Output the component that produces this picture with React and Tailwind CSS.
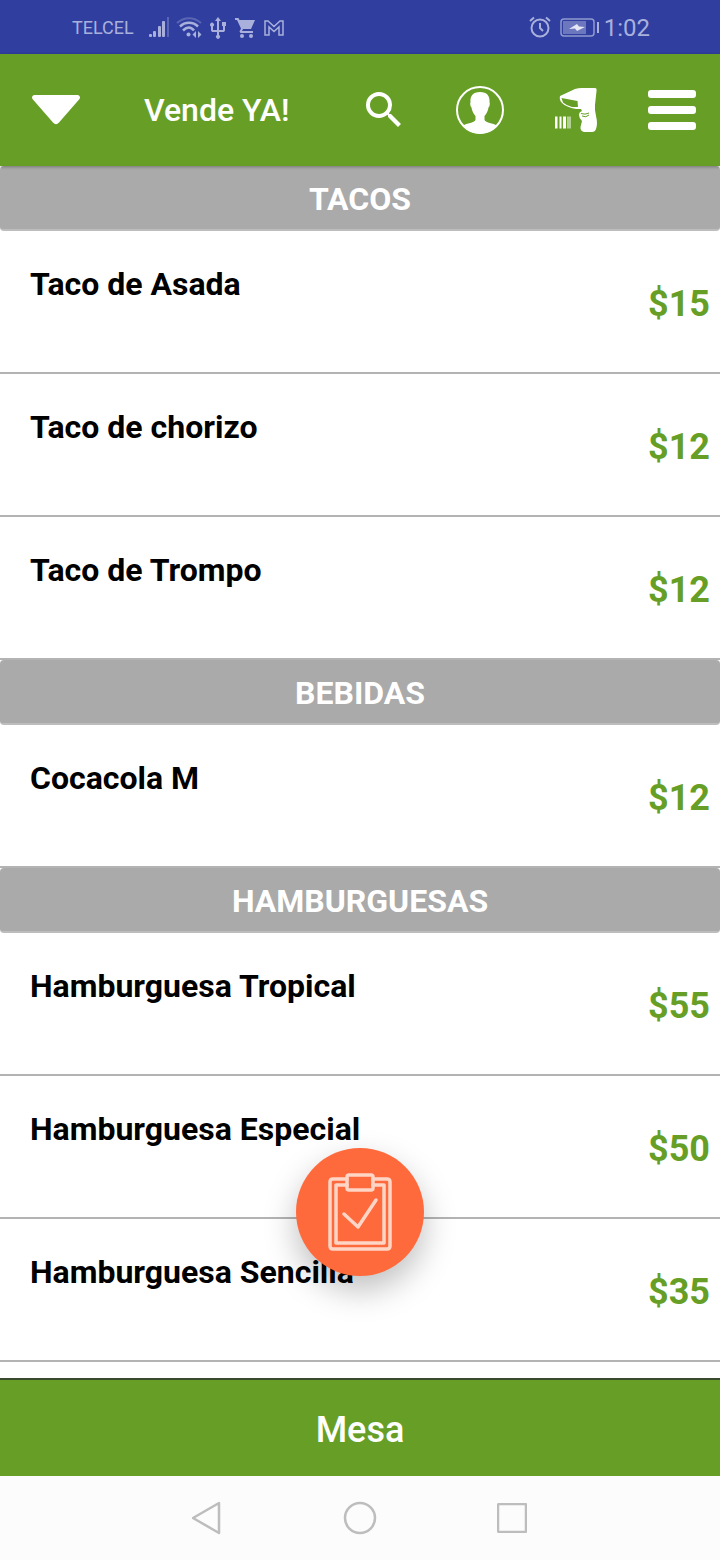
import { useState } from 'react';

const MENU = [
  {
    name: 'TACOS',
    items: [
      { id: 1, name: 'Taco de Asada', price: 15 },
      { id: 2, name: 'Taco de chorizo', price: 12 },
      { id: 3, name: 'Taco de Trompo', price: 12 },
    ],
  },
  {
    name: 'BEBIDAS',
    items: [{ id: 4, name: 'Cocacola M', price: 12 }],
  },
  {
    name: 'HAMBURGUESAS',
    items: [
      { id: 5, name: 'Hamburguesa Tropical', price: 55 },
      { id: 6, name: 'Hamburguesa Especial', price: 50 },
      { id: 7, name: 'Hamburguesa Sencilla', price: 35 },
    ],
  },
];

function StatusBar() {
  return (
    <div className="flex h-[54px] items-center justify-between bg-[#303f9f] pt-[2px] pl-[72px] pr-[70px] text-[#a9b0dc]">
      <div className="flex items-center">
        <span className="w-[76px] text-lg">TELCEL</span>
        <svg width="22" height="22" viewBox="0 0 22 22" fill="currentColor">
          <rect x="1" y="17" width="3" height="3" rx="1" />
          <rect x="5" y="14" width="3" height="6" rx="1" />
          <rect x="10" y="9" width="3" height="11" rx="1" />
          <rect x="14" y="4" width="3" height="16" rx="1" />
          <rect x="19" y="0" width="2" height="20" opacity="0.35" />
        </svg>
        <svg className="ml-[6px]" width="28" height="22" viewBox="0 0 28 22" fill="none" stroke="currentColor" strokeWidth="2">
          <path d="M1 6C8 -0.500 18 -0.500 25 6" opacity="0.35" />
          <path d="M4 9.500C9 4.500 17 4.500 22 9.500" strokeWidth="2.500" />
          <path d="M7 13.500C11 9.500 15 9.500 18 13.500" strokeWidth="2.500" />
          <circle cx="12.500" cy="17.500" r="2" fill="currentColor" stroke="none" />
          <path d="M20 14l-3.500 3.500 3.500 3.500zM22 14l3.500 3.500L22 21z" fill="currentColor" stroke="none" />
        </svg>
        <svg className="ml-[6px]" width="16" height="22" viewBox="0 0 16 22" fill="currentColor">
          <path d="M8 0l3 4H9v9h4V9h-1V5h4v4h-1v4.500L14 15H9v3a2 2 0 1 1-2 0v-3H2l-1-1.500V9.500a2 2 0 1 1 2 0V13h4V4H5z" />
        </svg>
        <svg className="ml-[8px]" width="24" height="22" viewBox="0 0 24 22" fill="currentColor">
          <path d="M1 1h3.500l1 2H21l-4 9H9l-1 2h11v2H6.500l-1-1.500L7 11.500 3 3H1z" />
          <circle cx="8" cy="19" r="2" />
          <circle cx="17" cy="19" r="2" />
        </svg>
        <svg className="ml-[6px]" width="20" height="18" viewBox="0 0 20 18" fill="none" stroke="currentColor" strokeWidth="1.500">
          <path d="M1 16V2H4L10 7.500L16 2H19V16H15V8L10 12.500L5 8V16Z" />
        </svg>
      </div>
      <div className="flex items-center">
        <svg width="22" height="24" viewBox="0 0 22 24" fill="none" stroke="currentColor" strokeWidth="2">
          <circle cx="11" cy="12" r="8.500" />
          <path d="M11 7v5l3 3M1 5l4-3.500M21 5l-4-3.500" />
        </svg>
        <svg className="ml-[9px]" width="40" height="20" viewBox="0 0 40 20" fill="none" stroke="currentColor">
          <rect x="1" y="1" width="33" height="17" rx="3" strokeWidth="1.500" opacity="0.8" />
          <rect x="3" y="3" width="23" height="13" fill="currentColor" stroke="none" opacity="0.5" />
          <path d="M9 11l8-5 2 2.500 6 0.500-8 4-2-2.500z" fill="#e4e6f6" stroke="none" />
          <path d="M38 4v11" strokeWidth="2" />
        </svg>
        <span className="ml-[4px] text-2xl">1:02</span>
      </div>
    </div>
  );
}

function Header() {
  return (
    <header className="relative z-10 flex h-28 items-center bg-[#679f26] text-white shadow-[0_1px_3px_rgba(0,0,0,0.3)]">
      <button aria-label="Categorías" className="flex h-28 w-28 items-center justify-center">
        <svg width="48" height="30" viewBox="0 0 48 30" fill="currentColor">
          <path d="M2 0H46Q49 1 47.500 4L27 27.500Q24 31 21 27.500L0.500 4Q-1 1 2 0Z" />
        </svg>
      </button>
      <h1 className="flex-1 pl-8 text-[32px] font-medium">Vende YA!</h1>
      <button aria-label="Buscar" className="flex h-28 w-24 items-center justify-center">
        <svg width="48" height="48" viewBox="0 0 24 24" fill="currentColor">
          <path d="M15.500 14h-.79l-.28-.27A6.471 6.471 0 0 0 16 9.500 6.500 6.500 0 1 0 9.500 16c1.610 0 3.090-.59 4.230-1.570l.27.28v.79l5 4.990L20.490 19l-4.990-5zm-6 0C7.010 14 5 11.990 5 9.500S7.010 5 9.500 5 14 7.010 14 9.500 11.990 14 9.500 14z" />
        </svg>
      </button>
      <button aria-label="Perfil" className="flex h-28 w-24 items-center justify-center">
        <svg width="48" height="48" viewBox="0 0 48 48">
          <circle cx="24" cy="24" r="23" fill="none" stroke="currentColor" strokeWidth="2" />
          <path
            d="M24 6C17 6 14 10 14.500 16C14 17 14 20 15.500 21.500C16 25 17.500 28 19.500 30V34C18 37 11 37 7 39.500C11 45 17 47.500 24 47.500S37 45 41 39.500C37 37 30 37 28.500 34V30C30.500 28 32 25 32.500 21.500C34 20 34 17 33.500 16C34 10 31 6 24 6Z"
            fill="currentColor"
          />
        </svg>
      </button>
      <button aria-label="Escanear código" className="flex h-28 w-24 items-center justify-center">
        <svg width="44" height="46" viewBox="0 0 44 46" fill="currentColor">
          <path
            fillRule="evenodd"
            d="M6 9L21 2Q24 1 28 1H41Q43 1 42.500 4L41 18Q40.500 23 42 29Q44 37 42 42Q41 45 38 45H30Q26 44 26.500 40L28 34Q25 31 25 28Q25 25 28 24L27 22H22Q12 20 8 16Q5 13 6 9ZM7.500 11L9 15.500Q13 19 18 20H24L23.500 14Z"
          />
          <path d="M27 26.500Q31 28 35 26M28 29Q32 31 35 28" fill="none" stroke="#679f26" />
          <path d="M1 29.500h2.500v12H1zM5.500 29.500h2v12h-2zM9 29.500h3v12H9zM13.500 29.500h1v12h-1zM15.500 29.500h1v12h-1z" />
        </svg>
      </button>
      <button aria-label="Menú" className="flex h-28 w-24 flex-col items-center justify-center gap-2">
        <span className="h-2 w-12 rounded-[3px] bg-white" />
        <span className="h-2 w-12 rounded-[3px] bg-white" />
        <span className="h-2 w-12 rounded-[3px] bg-white" />
      </button>
    </header>
  );
}

function Section({ section, onAdd }) {
  return (
    <section>
      <h2 className="rounded-sm border-b-2 border-[#bdbdbd] bg-[#aaaaaa] pt-[9px] pb-[6px] text-center text-[32px] leading-[48px] font-bold text-white">
        {section.name}
      </h2>
      <ul>
        {section.items.map((item) => (
          <li key={item.id} className="border-b-2 border-[#b3b3b3]">
            <button onClick={() => onAdd(item)} className="flex h-[141px] w-full justify-between pr-[10px] pl-[30px] text-left font-bold">
              <span className="pt-[33px] text-[32px] leading-10">{item.name}</span>
              <span className="pt-[53px] text-4xl text-[#679f26]">${item.price}</span>
            </button>
          </li>
        ))}
      </ul>
    </section>
  );
}

function NavBar() {
  return (
    <nav className="flex h-[84px] justify-center bg-[#fcfcfc] text-[#bdbdbd]">
      <button aria-label="Atrás" className="flex w-[152px] items-center justify-center">
        <svg width="32" height="34" viewBox="0 0 32 34" fill="none" stroke="currentColor" strokeWidth="2.500" strokeLinejoin="round">
          <path d="M1 17L27 2V32Z" />
        </svg>
      </button>
      <button aria-label="Inicio" className="flex w-[152px] items-center justify-center">
        <svg width="34" height="34" viewBox="0 0 34 34" fill="none" stroke="currentColor" strokeWidth="2.500">
          <circle cx="17" cy="17" r="15" />
        </svg>
      </button>
      <button aria-label="Recientes" className="flex w-[152px] items-center justify-center">
        <svg width="30" height="30" viewBox="0 0 30 30" fill="none" stroke="currentColor" strokeWidth="2.500">
          <rect x="1" y="1" width="28" height="28" rx="1" />
        </svg>
      </button>
    </nav>
  );
}

export default function App() {
  const [order, setOrder] = useState([]);

  return (
    <div className="flex min-h-screen flex-col bg-white font-[Roboto,sans-serif] text-black">
      <StatusBar />
      <Header />
      <main className="flex-1">
        {MENU.map((section) => (
          <Section key={section.name} section={section} onAdd={(item) => setOrder([...order, item])} />
        ))}
      </main>
      <footer className="sticky bottom-0">
        <button
          aria-label="Ver pedido"
          className="absolute bottom-full left-1/2 mb-[102px] flex size-32 -translate-x-1/2 items-center justify-center rounded-full bg-[#ff6a3d] shadow-[0_14px_32px_rgba(0,0,0,0.25)]"
        >
          <svg width="66" height="80" viewBox="0 0 66 80" fill="none" stroke="#ffd5c6" strokeWidth="3.500" strokeLinejoin="round" strokeLinecap="round">
            <path d="M20 7H6Q3 7 3 10V74Q3 77 6 77H60Q63 77 63 74V10Q63 7 60 7H46" />
            <path d="M20 13H9V71H57V13H46" />
            <rect x="20" y="3" width="26" height="15" rx="2" />
            <path d="M17 42L31 55L49 28" />
          </svg>
        </button>
        <button className="h-[98px] w-full border-t-2 border-[#3a4a2c] bg-[#679f26] pt-1 text-4xl font-medium text-white">
          Mesa
        </button>
        <NavBar />
      </footer>
    </div>
  );
}
